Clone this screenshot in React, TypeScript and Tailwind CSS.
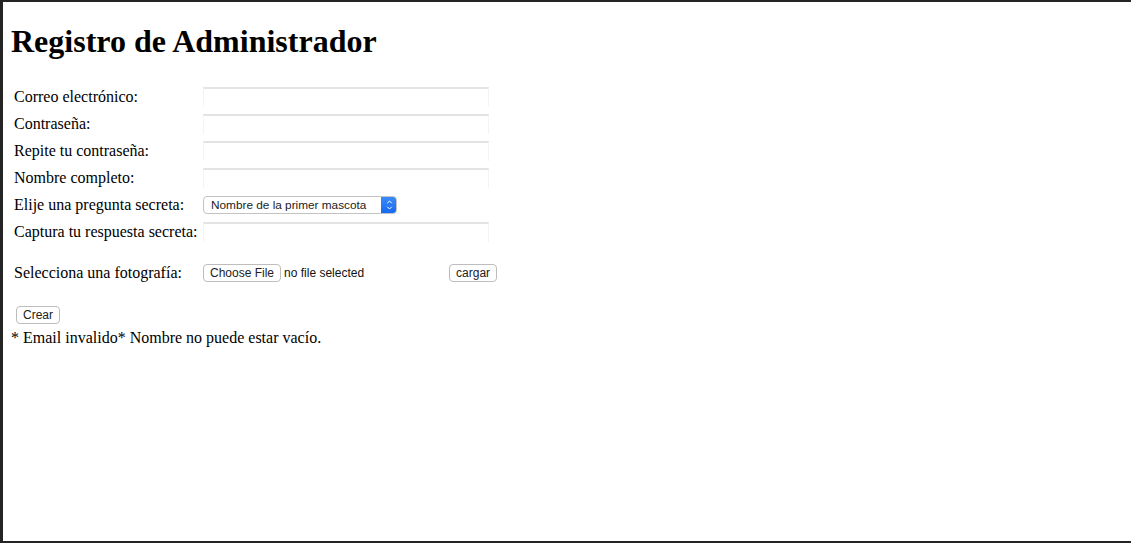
import { ChevronDown, ChevronUp } from 'lucide-react';

const labelCls = 'w-[189px] shrink-0 text-[16px] leading-[19px]';
const btnCls =
	"h-[18px] rounded-[4px] border border-[#bdbdbd] bg-white px-[6px] font-['Liberation_Sans',Arial,sans-serif] text-[12px] leading-[16px] text-[#222]";

function TextField({ type = 'text' }: { type?: string }) {
	return (
		<input
			type={type}
			className="h-[20px] w-[286px] border-t-2 border-x border-t-[#e3e3e3] border-x-[#f4f4f4] bg-white outline-none"
		/>
	);
}

function Row({ label, children }: { label: string; children: React.ReactNode }) {
	return (
		<div className="flex h-[27px] items-center">
			<label className={labelCls}>{label}</label>
			{children}
		</div>
	);
}

export default function App() {
	return (
		<main className="h-screen w-screen overflow-hidden border-t-2 border-b-2 border-l-[3px] border-[#242424] bg-white font-['Liberation_Serif','Times_New_Roman',serif] text-black">
			<div className="px-[8px] pt-[21px]">
				<h1 className="text-[32px] font-bold leading-[37px]">Registro de Administrador</h1>
				<form className="mt-[23px] pl-[3px]">
					<Row label="Correo electrónico:">
						<TextField type="email" />
					</Row>
					<Row label="Contraseña:">
						<TextField type="password" />
					</Row>
					<Row label="Repite tu contraseña:">
						<TextField type="password" />
					</Row>
					<Row label="Nombre completo:">
						<TextField />
					</Row>
					<Row label="Elije una pregunta secreta:">
						<div className="flex h-[18px] w-[194px] overflow-hidden rounded-[4px] border border-[#c3c3c3] bg-white font-['Liberation_Sans',Arial,sans-serif] text-[11.8px] text-[#222]">
							<span className="flex-1 pl-[7px] leading-[16px]">Nombre de la primer mascota</span>
							<span className="-my-px -mr-px flex w-[16px] flex-col items-center justify-center rounded-r-[4px] bg-gradient-to-b from-[#3b8cf9] to-[#1467f0] text-white">
								<ChevronUp className="-mb-[2px] h-[8px] w-[9px]" strokeWidth={3} />
								<ChevronDown className="h-[8px] w-[9px]" strokeWidth={3} />
							</span>
						</div>
					</Row>
					<Row label="Captura tu respuesta secreta:">
						<TextField />
					</Row>
					<div className="mt-[14px] flex h-[27px] items-center">
						<label className={labelCls}>Selecciona una fotografía:</label>
						<button type="button" className={btnCls}>
							Choose File
						</button>
						<span className="ml-[3px] w-[165px] font-['Liberation_Sans',Arial,sans-serif] text-[12px] text-[#111]">
							no file selected
						</span>
						<button type="button" className={btnCls}>
							cargar
						</button>
					</div>
					<div className="mt-[16px] pl-[2px]">
						<button type="button" className={btnCls}>
							Crear
						</button>
					</div>
				</form>
				<p className="mt-[2px] text-[16px] leading-[19px]">* Email invalido* Nombre no puede estar vacío.</p>
			</div>
		</main>
	);
}
